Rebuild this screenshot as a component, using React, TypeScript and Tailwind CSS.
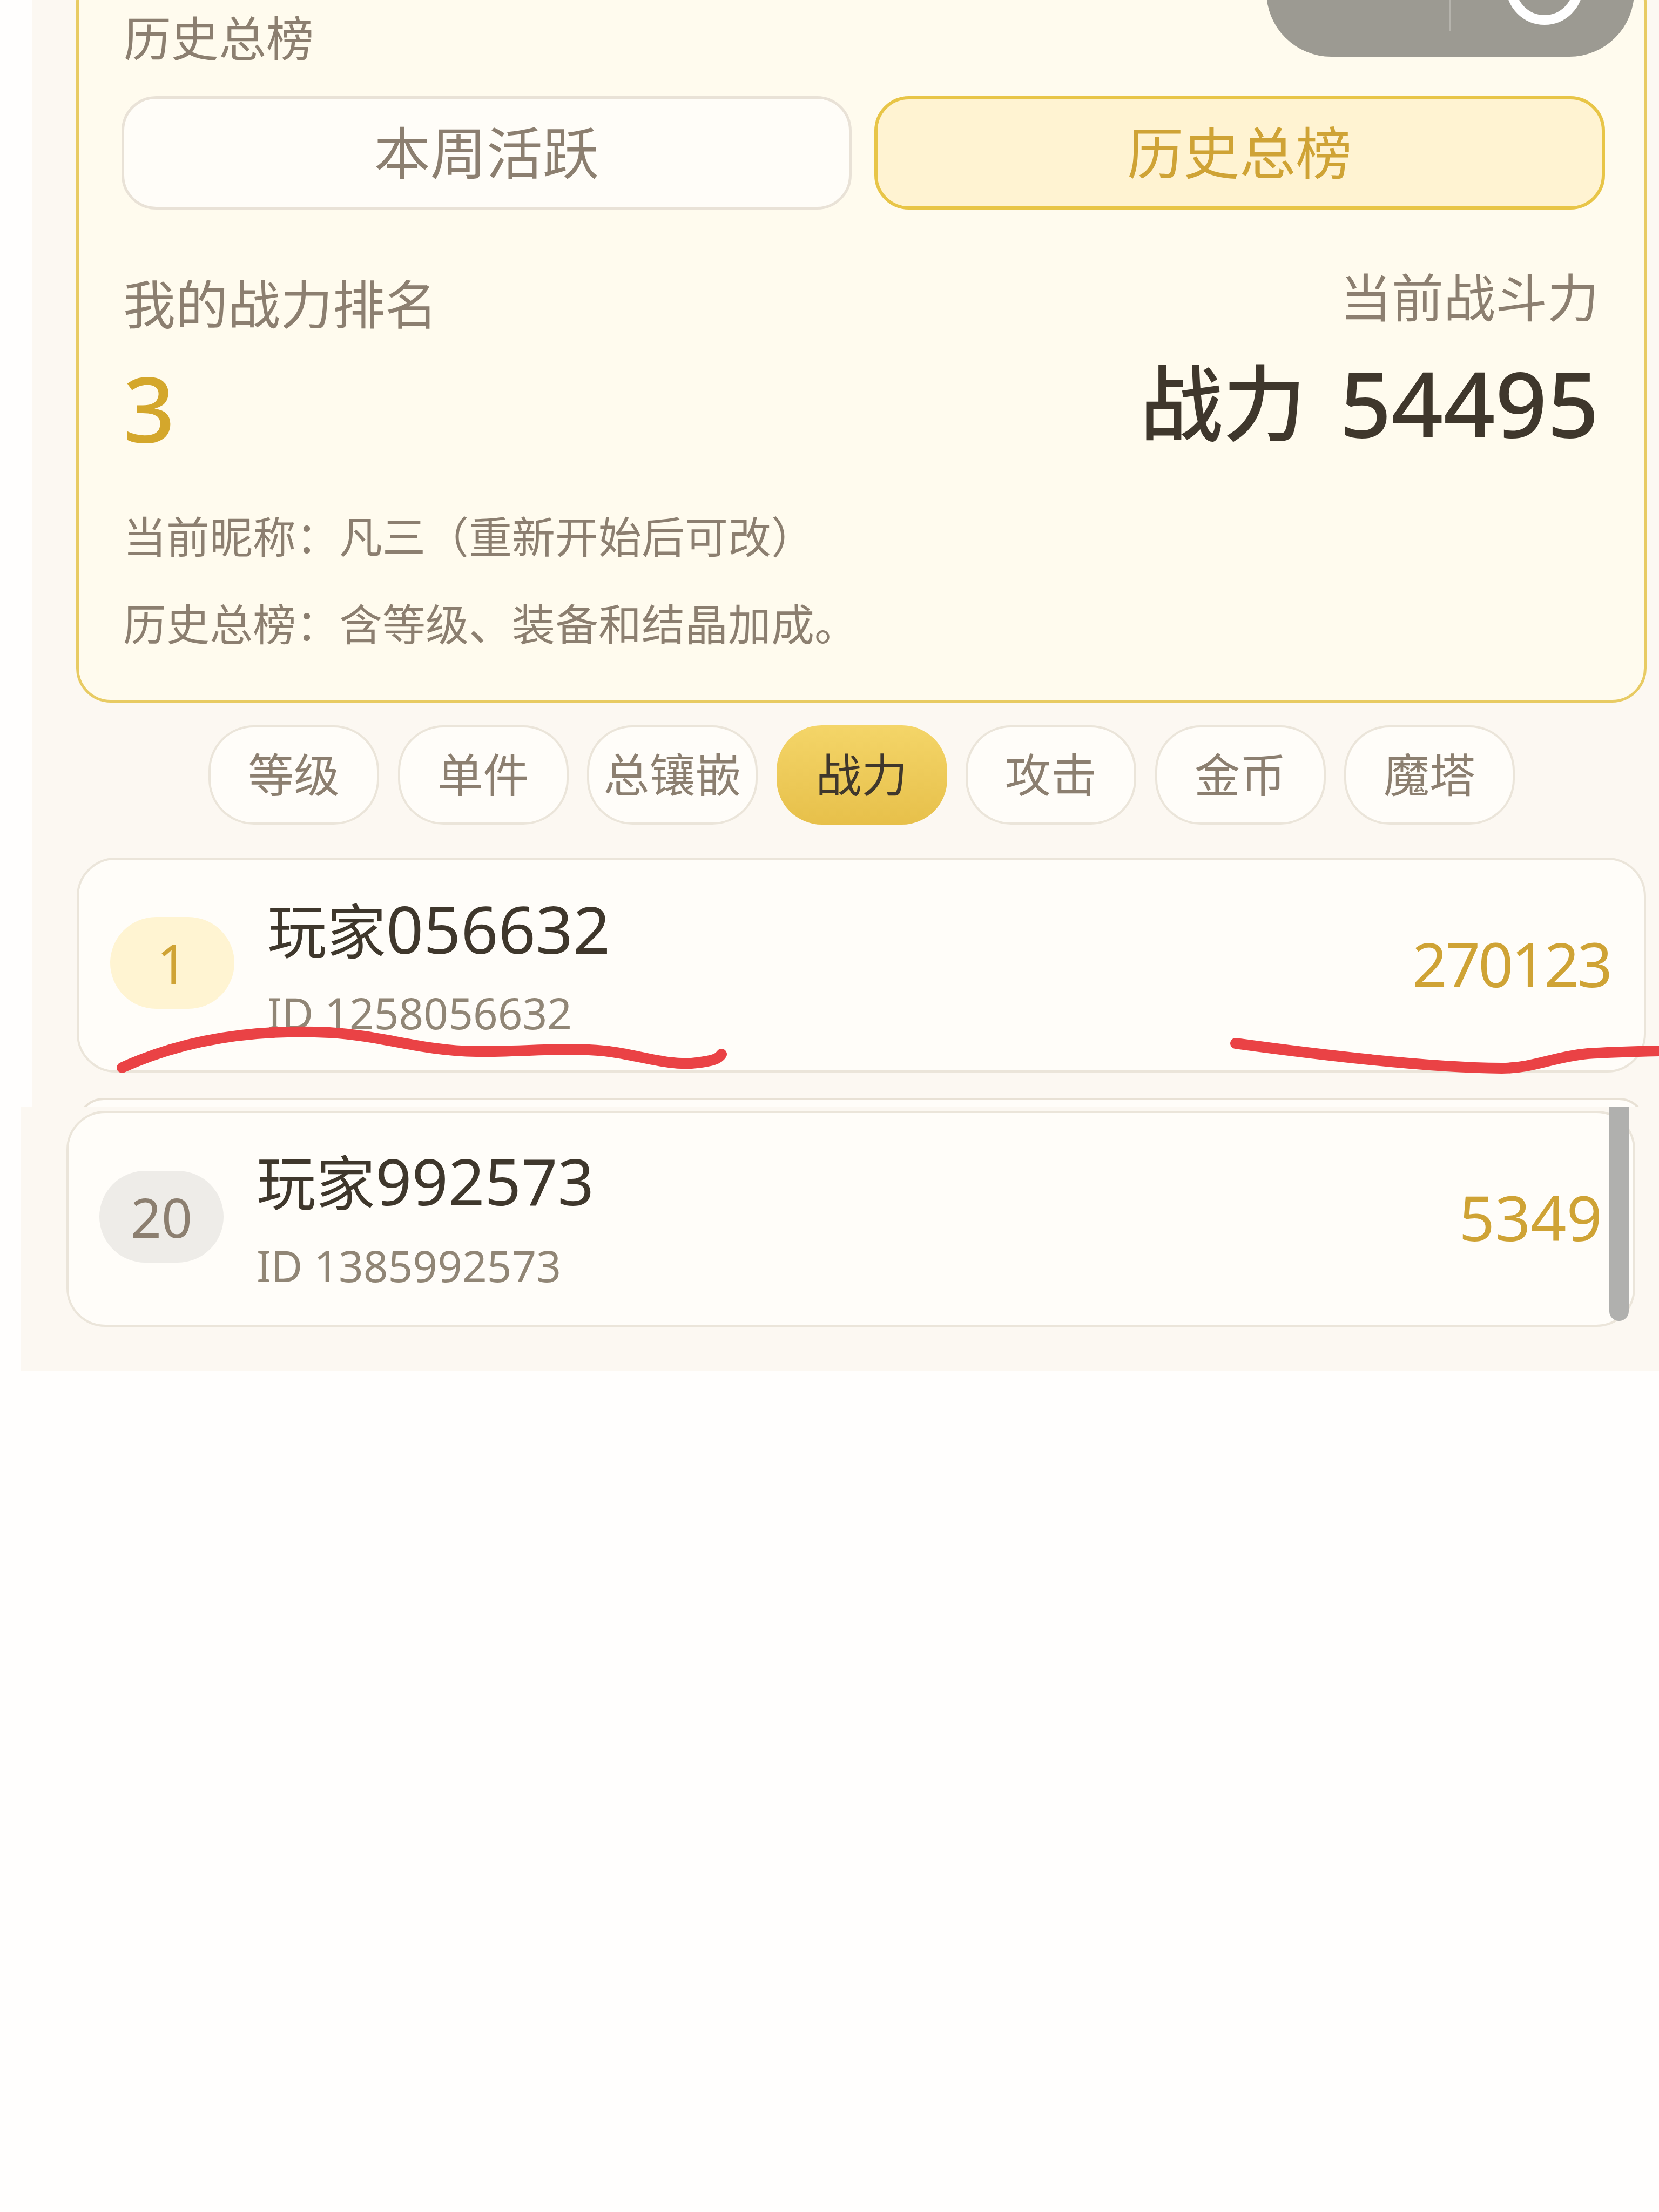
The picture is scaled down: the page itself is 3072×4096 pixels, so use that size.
const tabs = ["等级", "单件", "总镶嵌", "战力", "攻击", "金币", "魔塔"];

function Row({
  rank,
  name,
  id,
  score,
  rowClass,
  badge,
  textClass,
  nameClass,
  idClass,
  scoreClass,
}: {
  rank: string;
  name: string;
  id: string;
  score: string;
  rowClass: string;
  badge: string;
  textClass: string;
  nameClass: string;
  idClass: string;
  scoreClass: string;
}) {
  return (
    <div className={`flex items-center rounded-[72px] border-4 border-[#ebe5da] bg-[#fffdf9] pb-[8px] ${rowClass}`}>
      <div className={`flex h-[170px] w-[230px] items-center justify-center rounded-[85px] text-[100px] ${badge}`}>
        {rank}
      </div>
      <div className={`ml-[61px] flex-1 ${textClass}`}>
        <div className="h-[130px] text-[#3f372c]">
          <span className="text-[110px] leading-[130px]">玩家</span>
          <span className={`leading-[130px] ${nameClass}`}>{name}</span>
        </div>
        <div className={`h-[100px] text-[80px] leading-[100px] text-[#918676] ${idClass}`}>ID {id}</div>
      </div>
      <div className={`text-[#cfa335] ${scoreClass}`}>{score}</div>
    </div>
  );
}

function Capsule() {
  return (
    <div className="absolute left-[2345px] top-[-135px] flex h-[240px] w-[681px] rounded-[120px] bg-[#9c9a92]">
      <svg width="681" height="240" viewBox="0 0 681 240" fill="none">
        <line x1="340" y1="0" x2="340" y2="193" stroke="#b5b3ac" strokeWidth="3" />
        <circle cx="515" cy="110" r="62" stroke="#ffffff" strokeWidth="18" />
        <circle cx="515" cy="110" r="24" fill="#ffffff" />
      </svg>
    </div>
  );
}

function RedMarks() {
  return (
    <svg className="absolute left-0 top-0" width="3072" height="2100" viewBox="0 0 3072 2100" fill="none">
      <path
        d="M226 1977C340 1925 470 1905 610 1912C710 1918 780 1946 882 1947C960 1948 1060 1938 1127 1947C1180 1953 1240 1975 1290 1968C1315 1965 1330 1962 1336 1952"
        stroke="#ea4245"
        strokeWidth="20"
        strokeLinecap="round"
      />
      <path
        d="M2288 1932C2420 1950 2640 1977 2781 1978C2840 1978 2880 1956 2940 1951C2990 1948 3030 1947 3072 1946"
        stroke="#ea4245"
        strokeWidth="20"
        strokeLinecap="round"
      />
    </svg>
  );
}

export default function App() {
  return (
    <div className="relative h-[4096px] w-[3072px] overflow-hidden bg-[#fffefd] font-['Noto_Sans','Noto_Sans_CJK_SC',sans-serif]">
      {/* upper screenshot */}
      <div className="ml-[60px] h-[2050px] overflow-hidden bg-[#fcf8f2]">
        <div className="ml-[81px] mt-[-60px] w-[2908px] rounded-[64px] border-[5px] border-[#e8cb63] bg-[#fffbee] pb-[91px] pl-[79px] pr-[72px] pt-[75px]">
          <div className="ml-[4px] h-[100px] text-[88px] leading-[100px] text-[#8c7f70]">历史总榜</div>

          <div className="mt-[58px] flex gap-[42px]">
            <div className="flex h-[210px] flex-1 items-center justify-center rounded-[64px] border-[5px] border-[#e9e2d7] bg-[#fffdf8] text-[104px] text-[#8c7f70]">
              本周活跃
            </div>
            <div className="flex h-[210px] flex-1 items-center justify-center rounded-[64px] border-[6px] border-[#e8c547] bg-[#fff3d2] text-[104px] text-[#cfa335]">
              历史总榜
            </div>
          </div>

          <div className="mt-[107px] flex items-start justify-between pr-[11px]">
            <div className="ml-[3px] pt-[12px]">
              <div className="h-[110px] text-[97px] leading-[110px] text-[#8c7f70]">我的战力排名</div>
              <div className="mt-[42px] h-[190px] text-[168px] font-medium leading-[190px] text-[#d4a72c]">3</div>
            </div>
            <div className="flex flex-col items-end">
              <div className="h-[110px] text-[96px] leading-[110px] text-[#8c7f70]">当前战斗力</div>
              <div className="mt-[45px] flex h-[190px] items-center gap-[62px] font-medium text-[#3f372c]">
                <span className="text-[154px]">战力</span>
                <span className="text-[168px]">54495</span>
              </div>
            </div>
          </div>

          <div className="ml-[3px] mt-[94px] h-[100px] text-[80px] leading-[100px] text-[#8c7f70]">当前昵称：凡三（重新开始后可改）</div>
          <div className="ml-[3px] mt-[62px] h-[100px] text-[80px] leading-[100px] text-[#8c7f70]">历史总榜：含等级、装备和结晶加成。</div>
        </div>

        <div className="ml-[326px] mt-[42px] flex gap-[34.5px]">
          {tabs.map((t) =>
            t === "战力" ? (
              <div
                key={t}
                className="flex h-[184px] w-[316px] items-center justify-center rounded-[84px] bg-gradient-to-b from-[#f4d568] to-[#e7c04a] text-[85px] text-[#3f372c]"
              >
                {t}
              </div>
            ) : (
              <div
                key={t}
                className="flex h-[184px] w-[316px] items-center justify-center rounded-[84px] border-4 border-[#ebe5da] bg-[#fffdf9] text-[85px] text-[#8c7f70]"
              >
                {t}
              </div>
            ),
          )}
        </div>

        <div className="ml-[82px] mt-[61px]">
          <Row
            rank="1"
            name="056632"
            id="1258056632"
            score="270123"
            rowClass="h-[398px] w-[2906px] pl-[58px] pr-[62px]"
            badge="bg-[#fff4d2] text-[#cfa335]"
            textClass="pt-[13px]"
            nameClass="text-[121px]"
            idClass="mt-[41px]"
            scoreClass="text-[114px] tracking-[-4px]"
          />
        </div>
        <div className="ml-[82px] mt-[47px] h-[100px] w-[2906px] rounded-[72px] border-4 border-[#e8e1d5] bg-[#fffdf9]" />
      </div>

      {/* lower screenshot pasted over it */}
      <div className="relative ml-[38px] h-[488px] bg-[#fcf8f2] pl-[85px] pt-[7px]">
        <Row
          rank="20"
          name="992573"
          id="1385992573"
          score="5349"
          rowClass="h-[400px] w-[2905px] pl-[57px] pr-[57px]"
          badge="bg-[#eeece8] text-[#8c7f70]"
          textClass="pt-[9px]"
          nameClass="text-[118px]"
          idClass="mt-[41px]"
          scoreClass="text-[116px]"
        />
        <div className="absolute left-[2942px] top-0 h-[396px] w-[36px] rounded-b-[18px] bg-[#b0b0ae]" />
      </div>

      <Capsule />
      <RedMarks />
    </div>
  );
}
